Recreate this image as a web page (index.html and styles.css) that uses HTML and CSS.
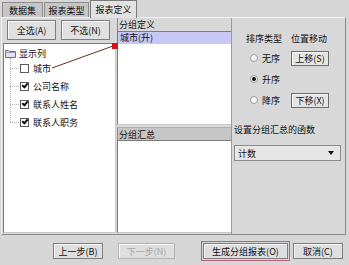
FILE: index.html
```html
<html>
<head>
  <link rel="stylesheet" href="styles.css">
</head>
<body>
  <div class="win">
    <div class="tabs">
      <div class="tab t1">数据集</div>
      <div class="tab t2">报表类型</div>
      <div class="tab active">报表定义</div>
    </div>

    <div class="panel">
      <div class="col-left">
        <div class="btn-row">
          <div class="btn big">全选(A)</div>
          <div class="btn big">不选(N)</div>
        </div>
        <div class="box tree">
          <div class="vline"></div>
          <div class="node root">
            <svg class="folder" width="11" height="9" viewBox="0 0 11 9">
              <path d="M0.5 1.5h3l1 1h6v6h-10z" fill="#e4e0f0" stroke="#6a6a80"/>
              <path d="M0.5 3.5h10" stroke="#9a98b8"/>
            </svg>
            显示列
          </div>
          <div class="node"><span class="hline"></span><span class="chk"></span>城市</div>
          <div class="node"><span class="hline"></span><span class="chk on"></span>公司名称</div>
          <div class="node"><span class="hline"></span><span class="chk on"></span>联系人姓名</div>
          <div class="node"><span class="hline"></span><span class="chk on"></span>联系人职务</div>
        </div>
      </div>

      <div class="col-mid">
        <div class="cap">分组定义</div>
        <div class="box list-def">
          <div class="row sel">城市(升)</div>
        </div>
        <div class="bar">分组汇总</div>
        <div class="box list-sum"></div>
      </div>

      <div class="col-right">
        <div class="opts">
          <div class="lbl">排序类型</div>
          <div class="lbl">位置移动</div>
          <div class="radio"><span class="dot"></span>无序</div>
          <div class="cell"><div class="btn small">上移(S)</div></div>
          <div class="radio"><span class="dot on"></span>升序</div>
          <div class="cell"></div>
          <div class="radio"><span class="dot"></span>降序</div>
          <div class="cell"><div class="btn small">下移(X)</div></div>
        </div>
        <div class="lbl fn">设置分组汇总的函数</div>
        <div class="combo">
          <span>计数</span>
          <span class="arrow"></span>
        </div>
      </div>
    </div>

    <div class="footer">
      <div class="btn foot prev">上一步(B)</div>
      <div class="btn foot next disabled">下一步(N)</div>
      <div class="focus-ring"><div class="btn foot gen">生成分组报表(O)</div></div>
      <div class="btn foot cancel">取消(C)</div>
    </div>

    <!-- drag annotation -->
    <svg class="anno" width="349" height="265">
      <line x1="52" y1="68" x2="113" y2="46" stroke="#6b2a2a" stroke-width="1"/>
      <rect x="112" y="43" width="6" height="6" fill="#d41414"/>
    </svg>
  </div>
</body>
</html>
```

FILE: styles.css
```css
body {
  margin: 0;
  background: #d6d6d6;
  font-family: "Noto Sans CJK SC", "Liberation Sans", sans-serif;
  font-size: 9px;
  color: #111;
}

.win {
  position: relative;
  width: 349px;
  height: 265px;
  overflow: hidden;
  background: #d6d6d6;
}

/* tabs */
.tabs {
  display: flex;
  height: 17px;
  padding-left: 2px;
  align-items: flex-end;
}

.tab {
  height: 15px;
  line-height: 15px;
  text-align: center;
  background: #c6c6c6;
  border: 1px solid #8c8c8c;
  border-bottom: none;
  box-sizing: border-box;
  margin-right: 1px;
}

.t1 { width: 41px; }
.t2 { width: 45px; }

.tab.active {
  width: 47px;
  height: 18px;
  line-height: 17px;
  background: #e2e2e2;
  border-color: #7a7a7a;
  margin-bottom: -1px;
  position: relative;
  z-index: 1;
}

/* tab body */
.panel {
  display: flex;
  margin-left: 1px;
  width: 345px;
  height: 218px;
  box-sizing: border-box;
  border: 1px solid #8a8a8a;
  border-top-color: #f2f2f2;
  border-left-color: #f2f2f2;
  background: #d8d8d8;
}

.box {
  background: #fff;
  border: 1px solid #7c7c7c;
  border-right-color: #c8c8c8;
  border-bottom-color: #c8c8c8;
  box-sizing: border-box;
}

.btn {
  display: flex;
  align-items: center;
  justify-content: center;
  background: #e0e0e0;
  border: 1px solid #7e7e7e;
  box-sizing: border-box;
  box-shadow: inset 1px 1px 0 #f6f6f6;
}

/* left column */
.col-left {
  width: 113px;
  margin-left: 1px;
  display: flex;
  flex-direction: column;
}

.btn-row {
  display: flex;
  gap: 5px;
  padding: 2px 0 0 4px;
  height: 25px;
  box-sizing: border-box;
}

.btn.big {
  width: 49px;
  height: 20px;
}

.tree {
  position: relative;
  height: 190px;
  padding-top: 3px;
}

.vline {
  position: absolute;
  left: 6px;
  top: 14px;
  height: 64px;
  border-left: 1px dotted #b0b0b0;
}

.node {
  display: flex;
  align-items: center;
  height: 18px;
  padding-left: 6px;
}

.node.root {
  height: 12px;
  padding-left: 1px;
  gap: 3px;
}

.hline {
  width: 9px;
  border-top: 1px dotted #b0b0b0;
  margin-right: 1px;
}

.chk {
  width: 7px;
  height: 7px;
  border: 1px solid #5a5a5a;
  background: #fff;
  margin-right: 4px;
  position: relative;
}

.chk.on::after {
  content: "";
  position: absolute;
  left: 1px;
  top: 0px;
  width: 4px;
  height: 2px;
  border-left: 2px solid #111;
  border-bottom: 2px solid #111;
  transform: rotate(-50deg);
}

/* middle column */
.col-mid {
  width: 114px;
  margin-left: 1px;
  display: flex;
  flex-direction: column;
}

.cap {
  height: 13px;
  line-height: 13px;
  padding-left: 1px;
  border-left: 1px solid #8a8a8a;
}

.list-def {
  height: 94px;
  border-right: none;
}

.row {
  height: 12px;
  line-height: 12px;
  padding-left: 2px;
}

.row.sel {
  background: #c8c8f6;
}

.bar {
  margin-top: 2px;
  height: 13px;
  line-height: 13px;
  background: #c6c6c6;
  border-top: 1px solid #b0b0b0;
  border-left: 1px solid #8a8a8a;
  box-sizing: border-box;
  padding-left: 1px;
}

.list-sum {
  flex: 1;
  border-right: none;
  margin-bottom: 1px;
}

/* right column */
.col-right {
  flex: 1;
  border-left: 1px solid #9a9a9a;
  padding: 14px 0 0 2px;
}

.opts {
  display: grid;
  grid-template-columns: 57px 54px;
  grid-template-rows: 14px 21px 21px 21px;
  row-gap: 0;
}

.lbl {
  line-height: 14px;
  padding-left: 12px;
}

.opts .lbl:nth-child(2) {
  padding-left: 0;
}

.radio {
  display: flex;
  align-items: center;
  padding-left: 16px;
  gap: 4px;
  margin-top: 3px;
}

.dot {
  width: 6px;
  height: 6px;
  border: 1px solid #9c9c9c;
  border-radius: 50%;
  background: #f4f4f4;
  position: relative;
}

.dot.on::after {
  content: "";
  position: absolute;
  left: 1px;
  top: 1px;
  width: 4px;
  height: 4px;
  border-radius: 50%;
  background: #111;
}

.cell {
  display: flex;
  align-items: center;
  margin-top: 3px;
}

.btn.small {
  width: 38px;
  height: 15px;
  background: #e4e4e4;
  border-color: #6c6c6c;
}

.lbl.fn {
  padding-left: 0;
  margin-top: 14px;
}

.combo {
  display: flex;
  align-items: center;
  justify-content: space-between;
  margin-top: 8px;
  width: 107px;
  height: 16px;
  box-sizing: border-box;
  border: 1px solid #8a8a8a;
  background: #e6e6e6;
  padding: 0 6px 0 3px;
}

.arrow {
  width: 0;
  height: 0;
  border-left: 3px solid transparent;
  border-right: 3px solid transparent;
  border-top: 4px solid #111;
}

/* footer */
.footer {
  display: flex;
  align-items: flex-start;
  padding-top: 8px;
}

.btn.foot {
  height: 16px;
  background: #dedede;
}

.prev {
  width: 50px;
  margin-left: 53px;
}

.next {
  width: 57px;
  margin-left: 15px;
}

.disabled {
  color: #a6a6a6;
  border-color: #b4b4b4;
}

.focus-ring {
  margin-left: 26px;
  margin-top: -2px;
  padding: 1px;
  border: 1px solid #c0607a;
}

.gen {
  width: 85px;
}

.cancel {
  width: 50px;
  margin-left: 3px;
}

.anno {
  position: absolute;
  left: 0;
  top: 0;
  pointer-events: none;
}
```
